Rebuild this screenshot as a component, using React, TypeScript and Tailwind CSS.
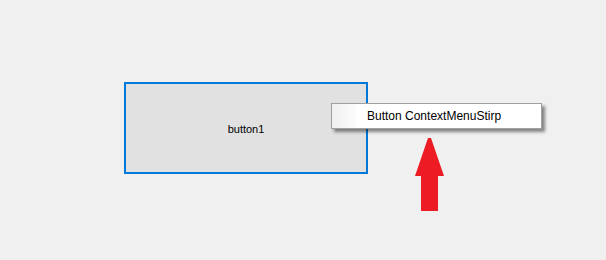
export default function App() {
  return (
    <div className="relative h-[260px] w-[606px] overflow-hidden bg-[#f0f0f0] pl-[124px] pt-[82px] font-['Liberation_Sans',_Arial,_sans-serif] text-[12px] text-black">
      {/* Button */}
      <button className="flex h-[92px] w-[244px] items-center justify-center border-2 border-[#0078d7] bg-[#e1e1e1] pt-[2px] font-['Liberation_Sans',_Arial,_sans-serif] text-[11px] text-black">
        button1
      </button>

      {/* Context menu */}
      <div className="absolute left-[331px] top-[103px] flex h-[26px] w-[211px] border border-[#a0a0a0] bg-white shadow-[3px_3px_3px_rgba(0,0,0,0.45)]">
        <div className="w-[24px] bg-gradient-to-r from-[#f0f0f0] to-[#fcfcfc]" />
        <div className="flex items-center pl-[11px] font-['Liberation_Sans',_Arial,_sans-serif] text-[12px] leading-none text-black">
          Button ContextMenuStirp
        </div>
      </div>

      {/* Arrow */}
      <svg
        className="absolute left-[415px] top-[137px]"
        width="29"
        height="74"
        viewBox="0 0 29 74"
      >
        <path d="M13 1 L16 1 L29 39 L23 39 L23 74 L6 74 L6 39 L0 39 Z" fill="#ed1c24" />
      </svg>
    </div>
  );
}
